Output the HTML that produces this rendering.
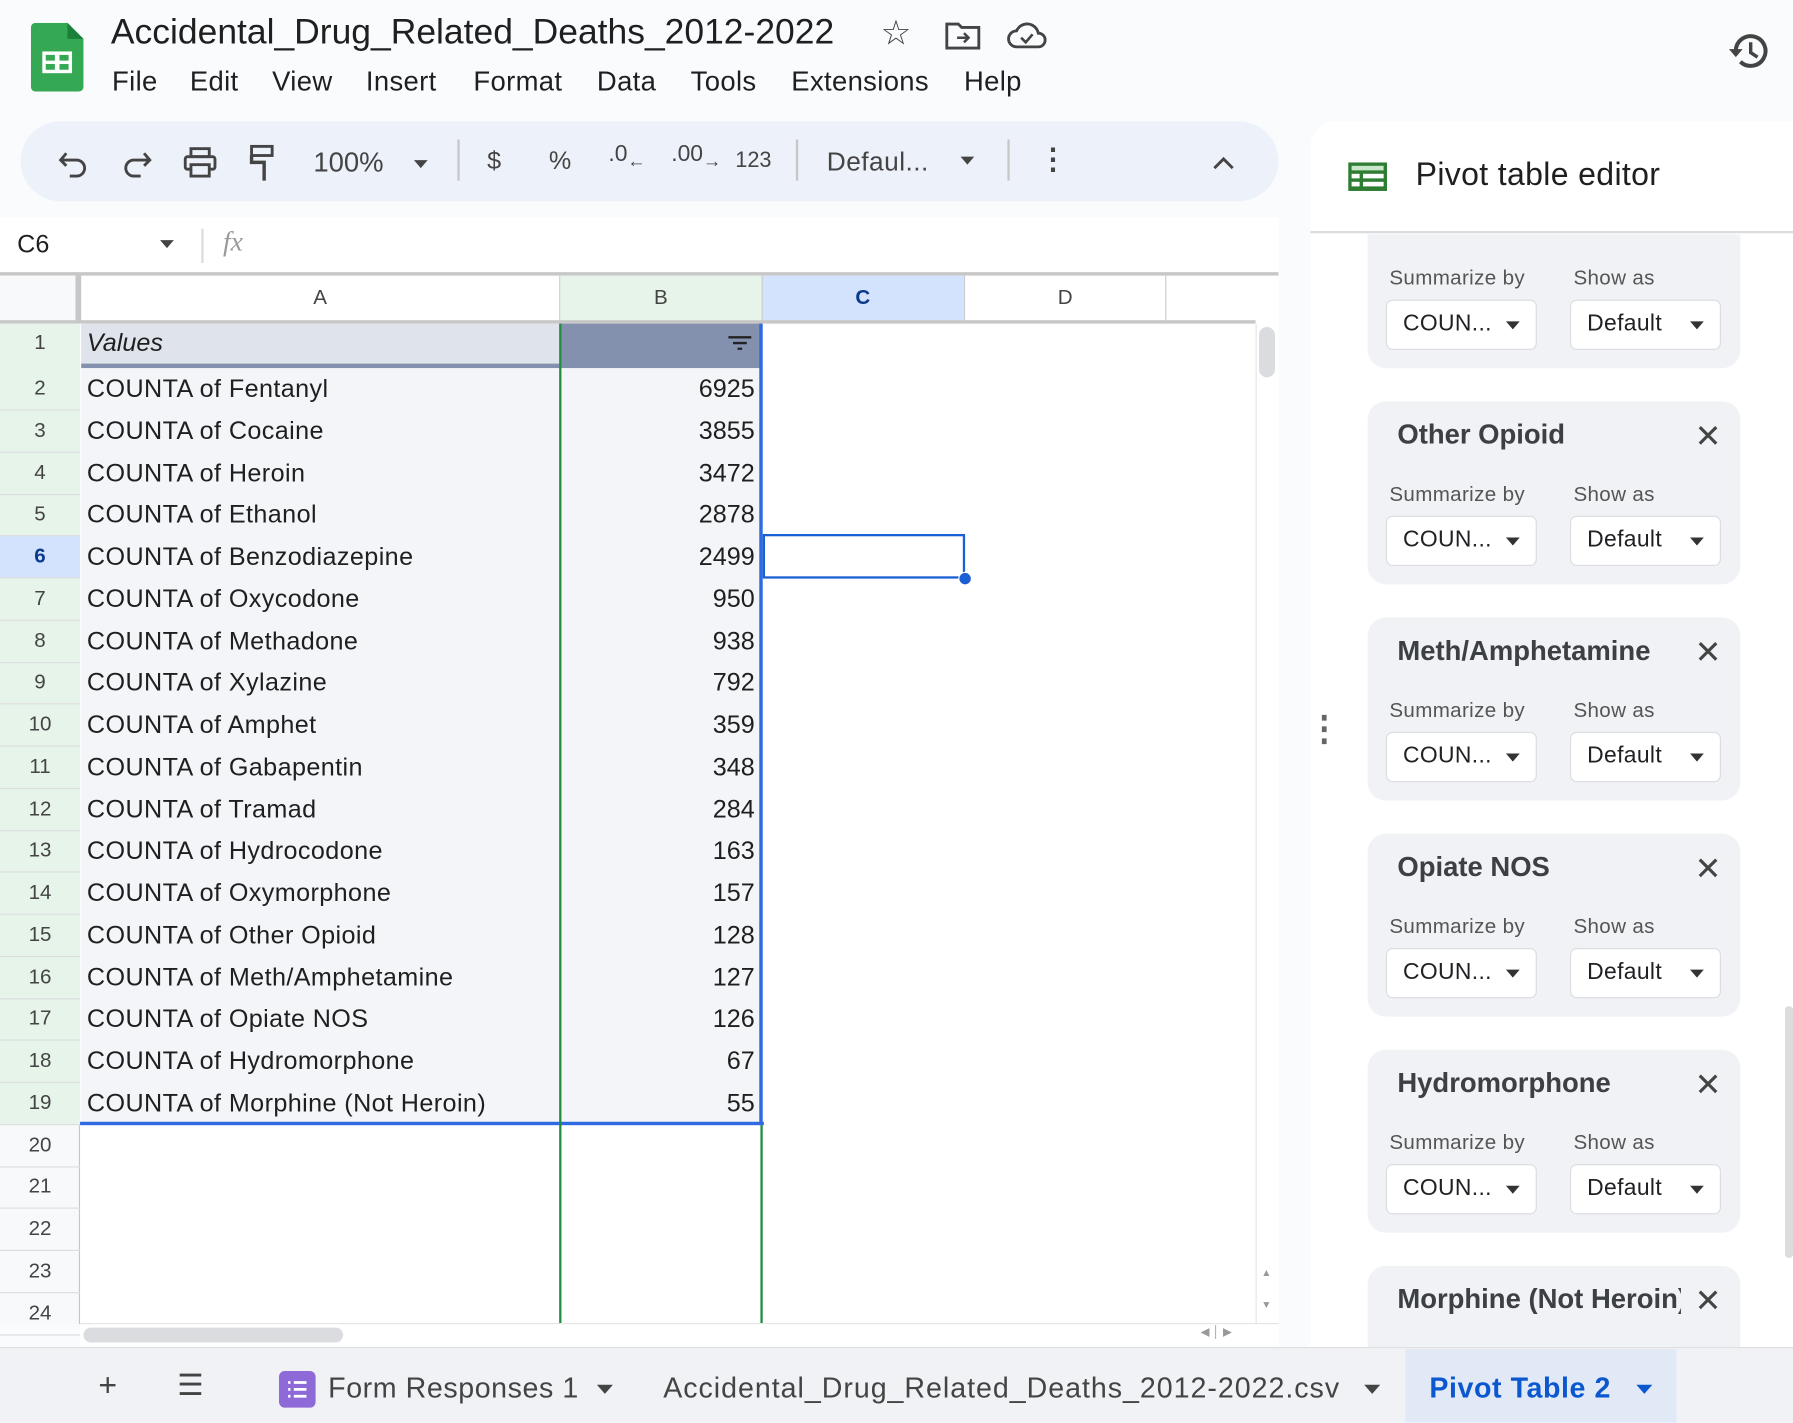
<!DOCTYPE html>
<html><head><meta charset="utf-8"><style>
*{box-sizing:border-box;margin:0;padding:0}
body{width:1793px;height:1423px;overflow:hidden;background:#f9fbfd;font-family:"Liberation Sans",Arial,sans-serif;color:#1f1f1f}
#w{position:absolute;left:0;top:0;width:1568px;height:1244px;transform:scale(1.14349);transform-origin:0 0;background:#f9fbfd}
.a{position:absolute}
.m{position:absolute;top:58px;font-size:24px;letter-spacing:.3px}
.tb{font-size:22px;color:#444}
.rh{position:absolute;left:0;width:70px;text-align:center;font-size:18px;color:#444}
.cl{position:absolute;left:76px;font-size:22px;letter-spacing:.35px}
.cv{position:absolute;right:908px;font-size:22px;text-align:right}
.card{position:absolute;left:1196px;width:326px;background:#f0f2f5;border-radius:16px}
.card .t{position:absolute;left:26px;top:16px;font-size:24px;font-weight:bold;color:#3c4043}
.card .x{position:absolute;left:286px;top:14px;font-size:28px;color:#444}
.lb{position:absolute;font-size:18px;color:#555;letter-spacing:.3px}
.dd{position:absolute;width:132px;height:44px;background:#fff;border:1.5px solid #dadce0;border-radius:6px;font-size:20px;padding:9px 0 0 14px;color:#202124;letter-spacing:.3px}
.dd:after{content:"";position:absolute;right:14px;top:18px;border:6px solid transparent;border-top:7px solid #333}
</style></head><body><div id="w">
<svg class="a" style="left:27px;top:20px" width="46" height="60" viewBox="0 0 46 60"><path d="M4 0h28l14 14v42a4 4 0 0 1-4 4H4a4 4 0 0 1-4-4V4a4 4 0 0 1 4-4z" fill="#34a853"/><path d="M32 0v14h14z" fill="#188038"/><rect x="10" y="25" width="26" height="19" fill="#fff"/><rect x="13" y="28" width="8" height="5" fill="#34a853"/><rect x="25" y="28" width="8" height="5" fill="#34a853"/><rect x="13" y="36" width="8" height="5" fill="#34a853"/><rect x="25" y="36" width="8" height="5" fill="#34a853"/></svg>
<div class="a" style="left:97px;top:10px;font-size:31px">Accidental_Drug_Related_Deaths_2012-2022</div>
<div class="a" style="left:770px;top:12px;font-size:30px;color:#444">☆</div>
<svg class="a" style="left:826px;top:18px" width="32" height="26" viewBox="0 0 32 26"><path d="M2 3h10l3 3h15v18H2z" fill="none" stroke="#444" stroke-width="2.5"/><path d="M11 15h10M17 11l4 4-4 4" fill="none" stroke="#444" stroke-width="2.2"/></svg>
<svg class="a" style="left:880px;top:18px" width="36" height="26" viewBox="0 0 36 26"><path d="M9 23a7 7 0 0 1 0-14 10 10 0 0 1 19 2 6 6 0 0 1 0 12z" fill="none" stroke="#444" stroke-width="2.5"/><path d="M13 15l4 4 6-7" fill="none" stroke="#444" stroke-width="2.3"/></svg>
<div class="m" style="left:98px">File</div><div class="m" style="left:166px">Edit</div><div class="m" style="left:238px">View</div><div class="m" style="left:320px">Insert</div><div class="m" style="left:414px">Format</div><div class="m" style="left:522px">Data</div><div class="m" style="left:604px">Tools</div><div class="m" style="left:692px">Extensions</div><div class="m" style="left:843px">Help</div>
<svg class="a" style="left:1510px;top:26px" width="40" height="38" viewBox="0 0 40 38"><path d="M8 19a13 13 0 1 1 4 9" fill="none" stroke="#444" stroke-width="3.5"/><path d="M2 17l6 7 6-7z" fill="#444"/><path d="M21 11v9l6 4" fill="none" stroke="#444" stroke-width="3"/></svg>
<div class="a" style="left:18px;top:106px;width:1100px;height:70px;background:#edf2fa;border-radius:35px"></div>
<svg class="a" style="left:50px;top:130px" width="28" height="26" viewBox="0 0 28 26"><path d="M8 4L3 10l5 5" fill="none" stroke="#444" stroke-width="2.5"/><path d="M3 10h14a7 7 0 0 1 0 14h-6" fill="none" stroke="#444" stroke-width="2.5"/></svg>
<svg class="a" style="left:106px;top:130px" width="28" height="26" viewBox="0 0 28 26"><path d="M20 4l5 6-5 5" fill="none" stroke="#444" stroke-width="2.5"/><path d="M25 10H11a7 7 0 0 0 0 14h6" fill="none" stroke="#444" stroke-width="2.5"/></svg>
<svg class="a" style="left:160px;top:128px" width="30" height="28" viewBox="0 0 30 28"><rect x="7" y="2" width="16" height="7" fill="none" stroke="#444" stroke-width="2.5"/><rect x="2" y="9" width="26" height="11" rx="2" fill="none" stroke="#444" stroke-width="2.5"/><rect x="7" y="16" width="16" height="10" fill="#edf2fa" stroke="#444" stroke-width="2.5"/></svg>
<svg class="a" style="left:216px;top:126px" width="28" height="34" viewBox="0 0 28 34"><rect x="4" y="2" width="18" height="8" fill="none" stroke="#444" stroke-width="2.5"/><path d="M4 10v6h11v16" fill="none" stroke="#444" stroke-width="3"/></svg>
<div class="a tb" style="left:274px;top:129px;font-size:24px">100%</div>
<div class="a" style="left:362px;top:140px;border:6px solid transparent;border-top:7px solid #444"></div>
<div class="a" style="left:400px;top:122px;width:1.5px;height:36px;background:#c7c7c7"></div>
<div class="a tb" style="left:426px;top:128px">$</div>
<div class="a tb" style="left:480px;top:128px">%</div>
<div class="a tb" style="left:532px;top:124px;font-size:20px">.0<sub style="font-size:16px">←</sub></div>
<div class="a tb" style="left:587px;top:124px;font-size:20px">.00<sub style="font-size:16px">→</sub></div>
<div class="a tb" style="left:643px;top:130px;font-size:19px">123</div>
<div class="a" style="left:696px;top:122px;width:1.5px;height:36px;background:#c7c7c7"></div>
<div class="a tb" style="left:723px;top:128px;font-size:23px;letter-spacing:.4px">Defaul...</div>
<div class="a" style="left:840px;top:137px;border:6px solid transparent;border-top:7px solid #444"></div>
<div class="a" style="left:881px;top:122px;width:1.5px;height:36px;background:#c7c7c7"></div>
<div class="a tb" style="left:908px;top:124px;font-size:26px;font-weight:bold">⋮</div>
<svg class="a" style="left:1060px;top:135px" width="20" height="14" viewBox="0 0 20 14"><path d="M2 12l8-8 8 8" fill="none" stroke="#444" stroke-width="2.5"/></svg>
<div class="a" style="left:0;top:190px;width:1118px;height:48px;background:#fff"></div>
<div class="a" style="left:15px;top:201px;font-size:22px">C6</div>
<div class="a" style="left:140px;top:210px;border:6px solid transparent;border-top:7px solid #444"></div>
<div class="a" style="left:176px;top:200px;width:1.5px;height:30px;background:#ddd"></div>
<div class="a" style="left:195px;top:199px;font-size:24px;color:#999;font-style:italic;font-family:'Liberation Serif',serif">fx</div>
<div class="a" style="left:0;top:238px;width:1118px;height:920px;background:#fff"></div>
<div class="a" style="left:0;top:238px;width:1118px;height:3px;background:#c7c7c7"></div>
<div class="a" style="left:0;top:241px;width:68px;height:41px;background:#f8f9fa"></div>
<div class="a" style="left:66px;top:241px;width:5px;height:41px;background:#c7c7c7"></div>
<div class="a" style="left:490px;top:241px;width:176px;height:41px;background:#e6f4ea"></div>
<div class="a" style="left:666px;top:241px;width:177px;height:41px;background:#d3e3fd"></div>
<div class="a" style="left:70px;top:250px;width:420px;text-align:center;font-size:18px;color:#444">A</div>
<div class="a" style="left:490px;top:250px;width:176px;text-align:center;font-size:18px;color:#444">B</div>
<div class="a" style="left:666px;top:250px;width:177px;text-align:center;font-size:18px;color:#0b3a8c;font-weight:bold">C</div>
<div class="a" style="left:843px;top:250px;width:177px;text-align:center;font-size:18px;color:#444">D</div>
<div class="a" style="left:489px;top:241px;width:1px;height:41px;background:#ccc"></div>
<div class="a" style="left:666px;top:241px;width:1px;height:41px;background:#ccc"></div>
<div class="a" style="left:843px;top:241px;width:1px;height:41px;background:#ccc"></div>
<div class="a" style="left:1019px;top:241px;width:1px;height:41px;background:#ccc"></div>
<div class="a" style="left:0;top:280px;width:1098px;height:3px;background:#c7c7c7"></div>
<div class="a" style="left:0;top:283px;width:70px;height:875px;background:#f8f9fa;border-right:1px solid #c7c7c7"></div>
<div class="a" style="left:0;top:283px;width:70px;height:700px;background:#e6f4ea"></div>
<div class="a" style="left:0;top:468px;width:70px;height:37px;background:#d3e3fd"></div>
<div class="a" style="left:71px;top:283px;width:419px;height:36px;background:#dfe3eb"></div>
<div class="a" style="left:490px;top:283px;width:176px;height:36px;background:#8391ae"></div>
<div class="a" style="left:71px;top:318px;width:595px;height:4px;background:#8391ae"></div>
<div class="a" style="left:71px;top:322px;width:595px;height:661px;background:#f3f5f8"></div>
<div class="a" style="left:70px;top:981px;width:598px;height:3px;background:#2f6ae0"></div>
<div class="a" style="left:664px;top:283px;width:3px;height:701px;background:#2f6ae0"></div>
<div class="a" style="left:489px;top:283px;width:1.5px;height:875px;background:#1e8e3e"></div>
<div class="a" style="left:665px;top:984px;width:1.5px;height:174px;background:#1e8e3e"></div>
<div class="a" style="left:76px;top:287px;font-size:22px;font-style:italic">Values</div>
<svg class="a" style="left:636px;top:293px" width="22" height="14" viewBox="0 0 22 14"><path d="M1 2h20M5 7h12M9 12h4" stroke="#222" stroke-width="2"/></svg>
<div class="a" style="left:667px;top:467px;width:177px;height:39px;border:2px solid #1a5fd6"></div>
<div class="a" style="left:838px;top:500px;width:12px;height:12px;border-radius:6px;background:#1a5fd6;border:1.5px solid #fff"></div>
<div class="a" style="left:1098px;top:283px;width:20px;height:875px;background:#fff;border-left:1px solid #e5e5e5"></div>
<div class="a" style="left:1101px;top:286px;width:14px;height:44px;border-radius:7px;background:#dadce0"></div>
<div class="a" style="left:1103px;top:1108px;font-size:9px;color:#999">▲</div>
<div class="a" style="left:1103px;top:1136px;font-size:9px;color:#999">▼</div>
<div class="a" style="left:70px;top:1157px;width:1048px;height:20px;background:#fff;border-top:1px solid #e5e5e5"></div>
<div class="a" style="left:73px;top:1161px;width:227px;height:13px;border-radius:7px;background:#dadce0"></div>
<div class="a" style="left:1050px;top:1160px;font-size:10px;color:#999">◀ │ ▶</div>
<div id="rows"></div>
<div class="a" style="left:1146px;top:106px;width:422px;height:1072px;background:#fff;border-top-left-radius:22px"></div>
<div class="a" style="left:1146px;top:202px;width:422px;height:1.5px;background:#dadce0"></div>
<svg class="a" style="left:1179px;top:142px" width="34" height="25" viewBox="0 0 34 25"><rect width="34" height="25" fill="#2e7d32"/><rect x="3" y="3" width="28" height="4" fill="#c8e6c9"/><rect x="3" y="10" width="7" height="4" fill="#fff"/><rect x="13" y="10" width="18" height="4" fill="#fff"/><rect x="3" y="17" width="7" height="4" fill="#fff"/><rect x="13" y="17" width="18" height="4" fill="#fff"/></svg>
<div class="a" style="left:1238px;top:137px;font-size:28px;color:#1f1f1f;letter-spacing:.3px">Pivot table editor</div>
<div class="a" style="left:1143px;top:620px;font-size:30px;color:#666;font-weight:bold">⋮</div>
<div class="a" style="left:1561px;top:880px;width:7px;height:220px;background:#ddd;border-radius:3px"></div>
<div id="cards"></div>
<div class="a" style="left:0;top:1178px;width:1568px;height:66px;background:#f0f2f5;border-top:1px solid #e0e0e0"></div>
<div class="a" style="left:86px;top:1196px;font-size:28px;color:#444">+</div>
<div class="a" style="left:155px;top:1196px;font-size:26px;color:#444">☰</div>
<div class="a" style="left:244px;top:1199px;width:32px;height:32px;border-radius:5px;background:#8e6ad8"></div>
<svg class="a" style="left:250px;top:1205px" width="20" height="20" viewBox="0 0 20 20"><path d="M2 4h2M7 4h11M2 10h2M7 10h11M2 16h2M7 16h11" stroke="#fff" stroke-width="2.4"/></svg>
<div class="a" style="left:287px;top:1200px;font-size:25px;color:#444;letter-spacing:.5px">Form Responses 1</div>
<div class="a" style="left:522px;top:1211px;border:7px solid transparent;border-top:8px solid #444"></div>
<div class="a" style="left:580px;top:1200px;font-size:25px;color:#444;letter-spacing:.85px">Accidental_Drug_Related_Deaths_2012-2022.csv</div>
<div class="a" style="left:1193px;top:1211px;border:7px solid transparent;border-top:8px solid #444"></div>
<div class="a" style="left:1229px;top:1180px;width:237px;height:64px;background:#e1e9f7"></div>
<div class="a" style="left:1250px;top:1200px;font-size:25px;color:#0b57d0;letter-spacing:.5px;font-weight:bold">Pivot Table 2</div>
<div class="a" style="left:1431px;top:1211px;border:7px solid transparent;border-top:8px solid #0b57d0"></div>
</div>
<script>
var d=[["Fentanyl",6925],["Cocaine",3855],["Heroin",3472],["Ethanol",2878],["Benzodiazepine",2499],["Oxycodone",950],["Methadone",938],["Xylazine",792],["Amphet",359],["Gabapentin",348],["Tramad",284],["Hydrocodone",163],["Oxymorphone",157],["Other Opioid",128],["Meth/Amphetamine",127],["Opiate NOS",126],["Hydromorphone",67],["Morphine (Not Heroin)",55]];
var h="";
for(var i=1;i<=24;i++){var c=i==1?300:340+(i-2)*36.76;var b=(i==6)?"font-weight:bold;color:#0b3a8c;":"";h+='<div class="rh" style="top:'+(c-11)+'px;'+b+'">'+i+'</div>';
if(i>1)h+='<div class="a" style="left:0;top:'+(c+18)+'px;width:70px;height:1px;background:#ddd"></div>';
if(i>=2&&i<=19){h+='<div class="cl" style="top:'+(c-13)+'px">COUNTA of '+d[i-2][0]+'</div><div class="cv" style="top:'+(c-13)+'px">'+d[i-2][1]+'</div>';}}
document.getElementById("rows").innerHTML=h;
var cs=[["",205,117],["Other Opioid",351,160],["Meth/Amphetamine",540,160],["Opiate NOS",729,160],["Hydromorphone",918,160],["Morphine (Not Heroin)",1107,80]];
var k="";
cs.forEach(function(c,j){var y=c[1],ly=j==0?233:y+71;
k+='<div class="card" style="top:'+y+'px;height:'+c[2]+'px;'+(j==0?'border-radius:0 0 16px 16px;':'')+(j==5?'border-radius:16px 16px 0 0;overflow:hidden;':'')+'">'+(c[0]?'<div class="t" style="'+(j==5?'white-space:nowrap;width:248px;overflow:hidden':'')+'">'+c[0]+'</div><div class="x">✕</div>':'')+'</div>';
if(j<5){k+='<div class="lb" style="left:1215px;top:'+ly+'px">Summarize by</div><div class="lb" style="left:1376px;top:'+ly+'px">Show as</div><div class="dd" style="left:1212px;top:'+(ly+29)+'px">COUN...</div><div class="dd" style="left:1373px;top:'+(ly+29)+'px">Default</div>';}});
document.getElementById("cards").innerHTML=k;
</script>
</body></html>
